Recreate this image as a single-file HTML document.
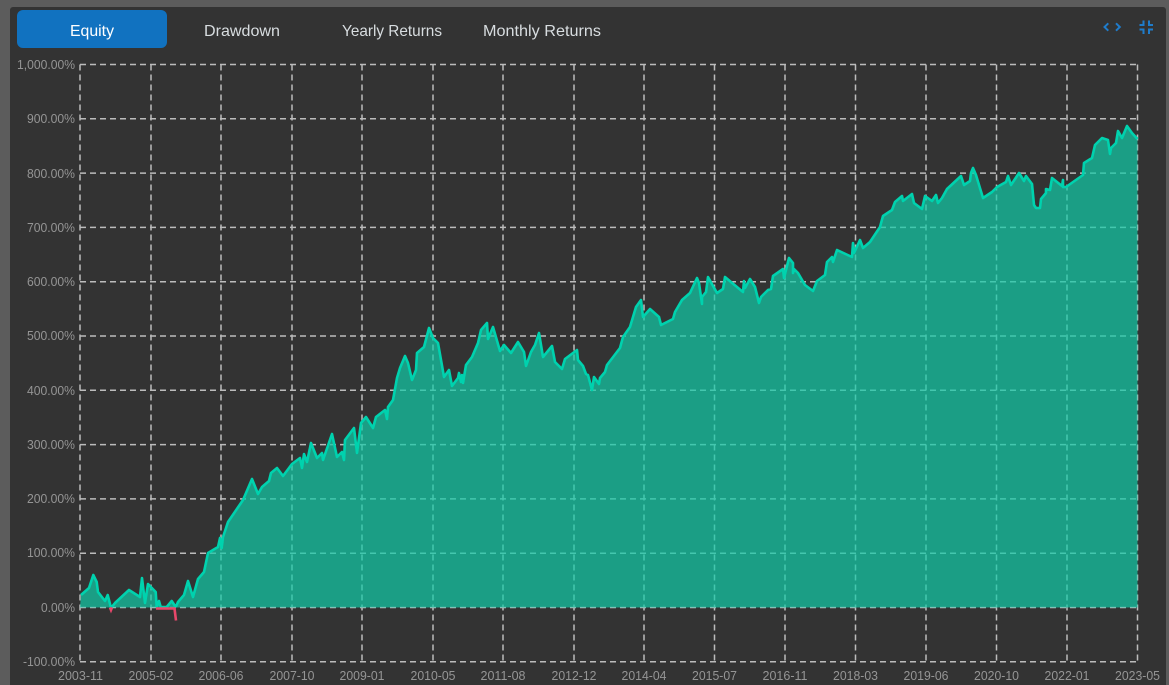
<!DOCTYPE html>
<html><head><meta charset="utf-8"><style>
html,body{margin:0;padding:0;width:1169px;height:685px;overflow:hidden;background:#5c5c5c}
svg{display:block;position:absolute;left:0;top:0}
text{font-family:"Liberation Sans",sans-serif}
.t{font-size:16px;fill:#d8dde0}
.l{font-size:13px;fill:#959595}
</style></head><body>
<svg width="1169" height="685" viewBox="0 0 1169 685" xmlns="http://www.w3.org/2000/svg">
<defs>
<clipPath id="up"><rect x="70" y="50" width="1080" height="557.5"/></clipPath>
<filter id="soft" x="0" y="0" width="100%" height="100%" filterUnits="userSpaceOnUse"><feGaussianBlur stdDeviation="0.35"/></filter>
</defs>
<path d="M10 685V10a3 3 0 0 1 3-3H1163a3 3 0 0 1 3 3V685Z" fill="#333333"/>
<rect x="17" y="10" width="150" height="38" rx="6" fill="#1172c0"/>
<text class="t" x="70" y="36" textLength="44" lengthAdjust="spacingAndGlyphs" style="fill:#fff">Equity</text>
<text class="t" x="204" y="36" textLength="76" lengthAdjust="spacingAndGlyphs">Drawdown</text>
<text class="t" x="342" y="36" textLength="100" lengthAdjust="spacingAndGlyphs">Yearly Returns</text>
<text class="t" x="483" y="36" textLength="118" lengthAdjust="spacingAndGlyphs">Monthly Returns</text>
<g fill="none" stroke="#1f7ccb" stroke-width="2">
<path d="M1108.3 23.3L1104.5 27L1108.3 30.7M1116 23.3L1119.8 27L1116 30.7"/>
<path d="M1139.5 25H1143.5V20.5M1153 25H1149V20.5M1139.5 29.5H1143.5V34M1153 29.5H1149V34"/>
</g>
<g fill="none" stroke="#bcbcbc" stroke-width="1.5" stroke-dasharray="6 4" filter="url(#soft)">
<path d="M80 64.5H1137.5M80 118.8H1137.5M80 173.1H1137.5M80 227.4H1137.5M80 281.7H1137.5M80 336H1137.5M80 390.3H1137.5M80 444.6H1137.5M80 498.9H1137.5M80 553.2H1137.5M80 607.5H1137.5M80 661.8H1137.5"/>
<path d="M80 64.5V661.8M151 64.5V661.8M221 64.5V661.8M292 64.5V661.8M362 64.5V661.8M433 64.5V661.8M503 64.5V661.8M574 64.5V661.8M644 64.5V661.8M714.5 64.5V661.8M785 64.5V661.8M855.5 64.5V661.8M926 64.5V661.8M996.5 64.5V661.8M1067 64.5V661.8M1137.5 64.5V661.8"/>
</g>
<g id="chart" filter="url(#soft)">
<path clip-path="url(#up)" fill="#0bcca8" fill-opacity="0.7" d="M80 607.5L81 595L89 588L93.3 575L96.7 582L98 592L105 601L107.7 595L111 608L115 603L129 590L140 597L142 578L145 603L148 584L155.7 592L156.7 607L159 601L160.7 607L166.7 607L171.7 601L175.7 607L178 602L184 595L188 581L193 597L198 579L204 572L208 553L218 547L220 538L221.7 548L223 537L228 522L243 500L252 479L258 494L262 487L269 481L271 473L277 468L283 476L292 464L300 458L302 468L304 454L307 462L311 443L317 458L322 453L323 460L332 434L337 457L342 452L344 460L345 440L354 428L357 453L361 423L366 417L373 428L376 417L385 410L387 419L388 407L393 400L397 378L400 368L405 356L408 363L412 380L416 370L417 353L424 347L429 328L433 338L438 343L444 377L449 370L452 386L458 378L459 373L461 382L462 375L463 383L466 365L472 357L478 343L481 330L487 323L488 339L493 327L500 351L504 345L511 353L518 342L524 352L526 366L531 352L535 345L539 333L543 357L552 346L555 362L562 369L565 359L577 350L578 360L583 366L586 374L588 375L592 390L594 377L599 384L600 378L605 372L607 365L620 348L623 337L630 327L636 307L641 300L643 317L650 309L659 317L661 325L673 319L675 312L682 300L690 293L697 278L699 283L702 304L702 297L706 292L708 277L717 293L723 289L725 277L743 292L744 281L745 288L750 279L755 287L759 303L761 297L768 290L771 289L773 276L783 269L784 278L789 258L793 263L793 273L794 269L798 273L805 285L813 291L817 281L825 275L827 262L832 257L833 262L837 250L852 257L853 243L854 253L860 240L863 248L870 242L880 227L883 216L892 210L895 202L902 196L903 201L912 194L914 203L922 209L925 196L932 201L936 195L938 203L942 198L947 189L961 176L964 185L970 181L971 173L973 168L976 175L983 198L992 192L997 187L1006 182L1008 176L1011 185L1019 173L1024 181L1026 176L1032 184L1034 205L1036 208L1040 208L1041 199L1046 193L1046 189L1050 190L1052 178L1062 186L1063 180L1063 187L1066 187L1083 175L1084 163L1092 158L1095 145L1102 138L1108 140L1110 154L1111 148L1116 143L1118 131L1122 138L1127 126L1132 133L1137.5 139V607.5Z"/>
<path clip-path="url(#up)" fill="none" stroke="#06d2ae" stroke-width="2.6" stroke-linejoin="round" d="M81 595L89 588L93.3 575L96.7 582L98 592L105 601L107.7 595L111 608L115 603L129 590L140 597L142 578L145 603L148 584L155.7 592L156.7 607L159 601L160.7 607L166.7 607L171.7 601L175.7 607L178 602L184 595L188 581L193 597L198 579L204 572L208 553L218 547L220 538L221.7 548L223 537L228 522L243 500L252 479L258 494L262 487L269 481L271 473L277 468L283 476L292 464L300 458L302 468L304 454L307 462L311 443L317 458L322 453L323 460L332 434L337 457L342 452L344 460L345 440L354 428L357 453L361 423L366 417L373 428L376 417L385 410L387 419L388 407L393 400L397 378L400 368L405 356L408 363L412 380L416 370L417 353L424 347L429 328L433 338L438 343L444 377L449 370L452 386L458 378L459 373L461 382L462 375L463 383L466 365L472 357L478 343L481 330L487 323L488 339L493 327L500 351L504 345L511 353L518 342L524 352L526 366L531 352L535 345L539 333L543 357L552 346L555 362L562 369L565 359L577 350L578 360L583 366L586 374L588 375L592 390L594 377L599 384L600 378L605 372L607 365L620 348L623 337L630 327L636 307L641 300L643 317L650 309L659 317L661 325L673 319L675 312L682 300L690 293L697 278L699 283L702 304L702 297L706 292L708 277L717 293L723 289L725 277L743 292L744 281L745 288L750 279L755 287L759 303L761 297L768 290L771 289L773 276L783 269L784 278L789 258L793 263L793 273L794 269L798 273L805 285L813 291L817 281L825 275L827 262L832 257L833 262L837 250L852 257L853 243L854 253L860 240L863 248L870 242L880 227L883 216L892 210L895 202L902 196L903 201L912 194L914 203L922 209L925 196L932 201L936 195L938 203L942 198L947 189L961 176L964 185L970 181L971 173L973 168L976 175L983 198L992 192L997 187L1006 182L1008 176L1011 185L1019 173L1024 181L1026 176L1032 184L1034 205L1036 208L1040 208L1041 199L1046 193L1046 189L1050 190L1052 178L1062 186L1063 180L1063 187L1066 187L1083 175L1084 163L1092 158L1095 145L1102 138L1108 140L1110 154L1111 148L1116 143L1118 131L1122 138L1127 126L1132 133L1137.5 139"/>
<path fill="none" stroke="#e8476b" stroke-width="2.6" d="M110 607.5L111 610L112 607.5M156 608.5H174.5L176 620.5"/>
</g>
<g text-anchor="end">
<text class="l" x="75" y="69" textLength="58" lengthAdjust="spacingAndGlyphs">1,000.00%</text>
<text class="l" x="75" y="123" textLength="48" lengthAdjust="spacingAndGlyphs">900.00%</text>
<text class="l" x="75" y="178" textLength="48" lengthAdjust="spacingAndGlyphs">800.00%</text>
<text class="l" x="75" y="232" textLength="48" lengthAdjust="spacingAndGlyphs">700.00%</text>
<text class="l" x="75" y="286" textLength="48" lengthAdjust="spacingAndGlyphs">600.00%</text>
<text class="l" x="75" y="340" textLength="48" lengthAdjust="spacingAndGlyphs">500.00%</text>
<text class="l" x="75" y="395" textLength="48" lengthAdjust="spacingAndGlyphs">400.00%</text>
<text class="l" x="75" y="449" textLength="48" lengthAdjust="spacingAndGlyphs">300.00%</text>
<text class="l" x="75" y="503" textLength="48" lengthAdjust="spacingAndGlyphs">200.00%</text>
<text class="l" x="75" y="557" textLength="48" lengthAdjust="spacingAndGlyphs">100.00%</text>
<text class="l" x="75" y="612" textLength="34" lengthAdjust="spacingAndGlyphs">0.00%</text>
<text class="l" x="75" y="666" textLength="52" lengthAdjust="spacingAndGlyphs">-100.00%</text>
</g>
<g text-anchor="middle">
<text class="l" x="80.5" y="680" textLength="45" lengthAdjust="spacingAndGlyphs">2003-11</text>
<text class="l" x="151" y="680" textLength="45" lengthAdjust="spacingAndGlyphs">2005-02</text>
<text class="l" x="221" y="680" textLength="45" lengthAdjust="spacingAndGlyphs">2006-06</text>
<text class="l" x="292" y="680" textLength="45" lengthAdjust="spacingAndGlyphs">2007-10</text>
<text class="l" x="362" y="680" textLength="45" lengthAdjust="spacingAndGlyphs">2009-01</text>
<text class="l" x="433" y="680" textLength="45" lengthAdjust="spacingAndGlyphs">2010-05</text>
<text class="l" x="503" y="680" textLength="45" lengthAdjust="spacingAndGlyphs">2011-08</text>
<text class="l" x="574" y="680" textLength="45" lengthAdjust="spacingAndGlyphs">2012-12</text>
<text class="l" x="644" y="680" textLength="45" lengthAdjust="spacingAndGlyphs">2014-04</text>
<text class="l" x="714.5" y="680" textLength="45" lengthAdjust="spacingAndGlyphs">2015-07</text>
<text class="l" x="785" y="680" textLength="45" lengthAdjust="spacingAndGlyphs">2016-11</text>
<text class="l" x="855.5" y="680" textLength="45" lengthAdjust="spacingAndGlyphs">2018-03</text>
<text class="l" x="926" y="680" textLength="45" lengthAdjust="spacingAndGlyphs">2019-06</text>
<text class="l" x="996.5" y="680" textLength="45" lengthAdjust="spacingAndGlyphs">2020-10</text>
<text class="l" x="1067" y="680" textLength="45" lengthAdjust="spacingAndGlyphs">2022-01</text>
<text class="l" x="1137.5" y="680" textLength="45" lengthAdjust="spacingAndGlyphs">2023-05</text>
</g>
</svg>
</body></html>
